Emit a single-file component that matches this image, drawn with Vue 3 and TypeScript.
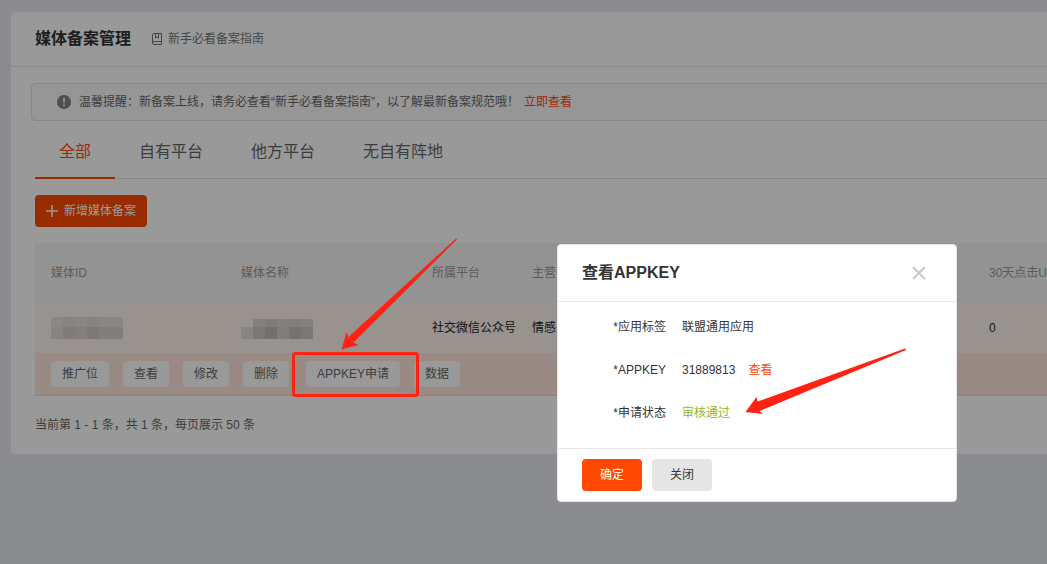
<script setup lang="ts">
import { ref } from 'vue'

const tabs = ['全部', '自有平台', '他方平台', '无自有阵地']
const activeTab = ref('全部')
const rowActions = ['推广位', '查看', '修改', '删除']
const keyActions = ['APPKEY申请', '数据']

interface Cell { x: number; y: number; h: number; fill: string }

function mosaic(rows: { y: number; h: number; fills: string[] }[]): Cell[] {
  return rows.flatMap(r => r.fills.map((fill, i) => ({ x: i * 12, y: r.y, h: r.h, fill })))
}

const idCells = mosaic([
  { y: 0, h: 10, fills: ['#e8e1dc', '#e2dbd6', '#e5dfda', '#e1dbd6', '#e6dfda', '#e6dfda'] },
  { y: 10, h: 12, fills: ['#e2dad5', '#d7cfca', '#dcd3d4', '#d2cac3', '#d8d2cd', '#d8d2cd'] },
])
const nameCells = mosaic([
  { y: 2, h: 8, fills: ['transparent', '#dbd4cf', '#d4ceca', '#dcd5d1', '#d8d2ce', '#dcd6d2'] },
  { y: 10, h: 12, fills: ['#e3ddd9', '#cec8c4', '#bfb9b5', '#d6d0cd', '#c4bebb', '#ccc6c3'] },
])
</script>

<template>
  <div class="page">
    <main class="card">
      <header class="card-head">
        <h1>媒体备案管理</h1>
        <a href="#" class="guide">
          <svg width="12" height="12" viewBox="0 0 12 12" fill="none" stroke="currentColor">
            <path d="M1.5 9.5V2Q1.5 .5 3 .5H10.5V11.5H3Q1.5 11.5 1.5 10Q1.5 8.5 3 8.5H10.5M4.5 .5V5L6 3.8L7.5 5V.5" />
          </svg>
          <span>新手必看备案指南</span>
        </a>
      </header>

      <div class="notice">
        <svg width="14" height="14" viewBox="0 0 14 14">
          <circle cx="7" cy="7" r="7" fill="#828282" />
          <path d="M6 3H8L7.6 8.2H6.4Z" fill="#fff" />
          <circle cx="7" cy="10.2" r="1" fill="#fff" />
        </svg>
        <span>温馨提醒：新备案上线，请务必查看“新手必看备案指南”，以了解最新备案规范哦！</span>
        <a href="#">立即查看</a>
      </div>

      <section class="content">
        <nav class="tabs">
          <button v-for="tab in tabs" :key="tab" type="button" :class="{ active: tab === activeTab }" @click="activeTab = tab">{{ tab }}</button>
        </nav>

        <button type="button" class="add">
          <svg width="12" height="12" viewBox="0 0 12 12"><path d="M6 0V12M0 6H12" stroke="#fff" stroke-width="1.5" /></svg>
          <span>新增媒体备案</span>
        </button>

        <table>
          <colgroup>
            <col class="c-id"><col class="c-name"><col class="c-platform"><col class="c-category"><col>
          </colgroup>
          <thead>
            <tr><th>媒体ID</th><th>媒体名称</th><th>所属平台</th><th>主营类目</th><th>30天点击UV</th></tr>
          </thead>
          <tbody>
            <tr class="record">
              <td>
                <svg class="mosaic" width="72" height="22" viewBox="0 0 72 22" shape-rendering="crispEdges">
                  <rect v-for="(c, i) in idCells" :key="i" :x="c.x" :y="c.y" width="12" :height="c.h" :fill="c.fill" />
                </svg>
              </td>
              <td>
                <svg class="mosaic" width="72" height="22" viewBox="0 0 72 22" shape-rendering="crispEdges">
                  <rect v-for="(c, i) in nameCells" :key="i" :x="c.x" :y="c.y" width="12" :height="c.h" :fill="c.fill" />
                </svg>
              </td>
              <td>社交微信公众号</td>
              <td>情感</td>
              <td>0</td>
            </tr>
            <tr class="operations">
              <td colspan="5">
                <div class="actions">
                  <div class="action-group">
                    <button v-for="a in rowActions" :key="a" type="button">{{ a }}</button>
                  </div>
                  <div class="action-group">
                    <button v-for="a in keyActions" :key="a" type="button">{{ a }}</button>
                  </div>
                </div>
              </td>
            </tr>
          </tbody>
        </table>

        <p class="summary">当前第 1 - 1 条，共 1 条，每页展示 50 条</p>
      </section>
    </main>

    <div class="mask"></div>

    <section class="dialog" role="dialog" aria-labelledby="dialog-title">
      <header>
        <h2 id="dialog-title">查看APPKEY</h2>
        <button type="button" class="close" aria-label="关闭窗口">
          <svg width="14" height="14" viewBox="0 0 14 14"><path d="M1 1L13 13M13 1L1 13" stroke="#c8c8c8" stroke-width="2" /></svg>
        </button>
      </header>
      <dl>
        <dt>*应用标签</dt><dd>联盟通用应用</dd>
        <dt>*APPKEY</dt><dd>31889813<a href="#">查看</a></dd>
        <dt>*申请状态</dt><dd class="passed">审核通过</dd>
      </dl>
      <footer>
        <button type="button" class="confirm">确定</button>
        <button type="button" class="cancel">关闭</button>
      </footer>
    </section>

    <svg class="marks" width="1047" height="564" viewBox="0 0 1047 564" fill="#ff2213">
      <rect x="293.5" y="353.5" width="124" height="42" rx="2" fill="none" stroke="#ff2213" stroke-width="3" />
      <path d="M456 238.5L457 239.5L353.5 342.5L358.5 345L341.5 349.5L346.5 332L348.5 337Z" />
      <path d="M905 348.5L906 350L759.5 411L763 414L745.5 412L756.5 397L757.5 401.5Z" />
    </svg>
  </div>
</template>

<style>
body {
  margin: 0;
  background: #e8e9f0;
}
</style>

<style scoped>
.page {
  position: relative;
  box-sizing: border-box;
  min-height: 100vh;
  padding: 12px 0 12px 11px;
  overflow: hidden;
  font: 12px/18px "Liberation Sans", "Noto Sans CJK SC", sans-serif;
  color: #333;
  background: #e8e9f0;
}
button {
  font: inherit;
  color: inherit;
  border: 0;
  padding: 0;
  cursor: pointer;
}
a {
  color: #ff4800;
  text-decoration: none;
}
h1, h2 {
  margin: 0;
  font-size: 16px;
  font-weight: 700;
  line-height: 24px;
}
.card {
  min-width: 1180px;
  background: #fff;
  border-radius: 4px;
}
.card-head {
  display: flex;
  align-items: center;
  gap: 20px;
  height: 54px;
  padding: 0 24px;
  border-bottom: 1px solid #e8e8ea;
}
.guide {
  display: flex;
  align-items: center;
  gap: 5px;
  color: #777;
}
.notice {
  display: flex;
  align-items: center;
  height: 36px;
  margin: 16px 20px 0;
  padding: 0 25px;
  color: #666;
  background: #fafafa;
  border: 1px solid #e0e0e0;
  border-radius: 4px;
}
.notice span {
  margin-left: 8px;
}
.notice a {
  margin-left: 5px;
}
.content {
  padding: 0 24px 20px;
}
.tabs {
  display: flex;
  height: 57px;
  border-bottom: 1px solid #e0e0e0;
}
.tabs button {
  height: 58px;
  box-sizing: border-box;
  padding: 6px 24px 0;
  font-size: 16px;
  color: #666;
  background: none;
  border-bottom: 2px solid transparent;
}
.tabs .active {
  color: #ff4800;
  border-color: #ff4800;
}
.add {
  display: flex;
  align-items: center;
  gap: 6px;
  height: 32px;
  margin: 16px 0;
  padding: 0 11px;
  color: #fff;
  background: #ff4800;
  border-radius: 4px;
}
table {
  width: 100%;
  table-layout: fixed;
  border-collapse: separate;
  border-spacing: 0;
  white-space: nowrap;
}
.c-id { width: 190px; }
.c-name { width: 191px; }
.c-platform { width: 100px; }
.c-category { width: 457px; }
th, td {
  padding: 0 0 0 16px;
  text-align: left;
  font-weight: 400;
}
th {
  height: 60px;
  color: #999;
  background: #f5f5f5;
}
.record td {
  height: 50px;
  color: #222;
  background: #fff5f0;
}
.mosaic {
  display: block;
  border-radius: 4px 4px 0 0;
}
.operations td {
  height: 42px;
  background: #ffe6dc;
  border-bottom: 1px solid #e0dfe2;
}
.actions {
  display: flex;
  gap: 17px;
}
.action-group {
  display: flex;
  gap: 14px;
}
.action-group button {
  height: 26px;
  padding: 0 11px;
  color: #666;
  background: #fff;
  border-radius: 4px;
}
.summary {
  margin: 20px 0 0;
  color: #666;
}
.mask {
  position: absolute;
  inset: 0;
  background: rgba(0, 0, 0, 0.4);
}
.dialog {
  position: absolute;
  top: 244px;
  left: 557px;
  box-sizing: border-box;
  width: 400px;
  background: #fff;
  border: 1px solid #e6e6e6;
  border-radius: 4px;
}
.dialog header {
  display: flex;
  align-items: center;
  justify-content: space-between;
  height: 56px;
  padding: 0 30px 0 24px;
  border-bottom: 1px solid #e6e6e6;
}
.close {
  display: flex;
  background: none;
}
dl {
  display: grid;
  grid-template-columns: 84px 1fr;
  gap: 25px 16px;
  margin: 0;
  padding: 16px 24px 26px;
}
dt {
  text-align: right;
}
dd {
  margin: 0;
}
dd a {
  margin-left: 13px;
}
.passed {
  color: #8fb81e;
}
.dialog footer {
  display: flex;
  gap: 10px;
  padding: 10px 24px;
  border-top: 1px solid #e6e6e6;
}
.dialog footer button {
  width: 60px;
  height: 32px;
  border-radius: 4px;
}
.dialog .confirm {
  color: #fff;
  background: #ff4800;
}
.dialog .cancel {
  background: #e5e5e5;
}
.marks {
  position: absolute;
  top: 0;
  left: 0;
  pointer-events: none;
}
</style>
